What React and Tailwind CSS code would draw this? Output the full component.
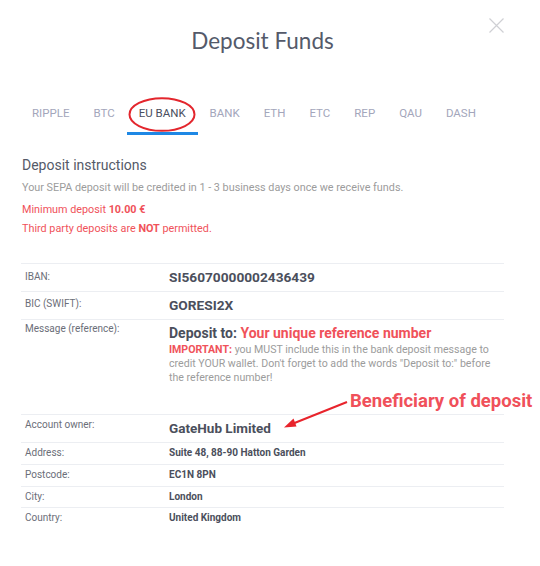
import React from "react";

const tabs = ["RIPPLE", "BTC", "EU BANK", "BANK", "ETH", "ETC", "REP", "QAU", "DASH"];

function Row({ label, children, className, labelClass, valueClass }) {
  return (
    <div className={"flex border-t border-[#eceef2] " + className}>
      <div className={"w-[148px] shrink-0 pl-[4px] text-[10px] leading-[14px] text-[#6b6e78] whitespace-nowrap " + labelClass}>{label}</div>
      <div className={"flex-1 " + valueClass}>{children}</div>
    </div>
  );
}

export default function App() {
  return (
    <div className="relative w-[540px] h-[566px] bg-white overflow-hidden" style={{ fontFamily: "Roboto, 'Liberation Sans', sans-serif" }}>
      {/* close */}
      <svg className="absolute left-[489px] top-[18px]" width="15" height="15" viewBox="0 0 15 15">
        <path d="M0.5 0.5 L14.5 14.5 M14.5 0.5 L0.5 14.5" stroke="#cfd0d4" strokeWidth="1.2" fill="none" />
      </svg>

      <div className="pl-[21px] pr-[36px]">
        <h1
          className="pt-[26px] h-[56px] text-center text-[22.5px] leading-[30px] text-[#545a6a]"
          style={{ fontFamily: "Lato, 'Liberation Sans', sans-serif" }}
        >
          Deposit Funds
        </h1>

        <div className="mt-[47px] -ml-[1px] flex">
          {tabs.map((t) => {
            const active = t === "EU BANK";
            return (
              <div
                key={t}
                className={
                  "relative whitespace-nowrap px-[12px] pb-[9px] text-[11.5px] leading-[20px] border-b-[3px] " +
                  (active ? "border-[#1e88e5] text-[#4a4f5e]" : "border-transparent text-[#a3a6bb]")
                }
              >
                {t}
                {active && (
                  <svg className="absolute left-[1px] top-[-6px]" width="68" height="35" viewBox="0 0 68 35">
                    <ellipse cx="34" cy="17.5" rx="32.5" ry="16.3" stroke="#e3262d" strokeWidth="2" fill="none" />
                  </svg>
                )}
              </div>
            );
          })}
        </div>

        <div className="mt-[20px] pl-[1px]">
          <div className="text-[14px] leading-[20px] text-[#555a68]">Deposit instructions</div>
          <p className="mt-[5px] text-[10.8px] leading-[16px] text-[#9c9c9c]">
            Your SEPA deposit will be credited in 1 - 3 business days once we receive funds.
          </p>
          <p className="mt-[6px] text-[10.8px] leading-[16px] text-[#f0525a]">
            Minimum deposit <b className="font-bold">10.00 €</b>
          </p>
          <p className="mt-[3px] text-[10.8px] leading-[16px] text-[#f0525a]">
            Third party deposits are <b className="font-bold">NOT</b> permitted.
          </p>
        </div>

        <div className="mt-[26px]">
          <Row label="IBAN:" className="h-[28px]" labelClass="pt-[6px]" valueClass="pt-[4px]">
            <div className="text-[13.7px] leading-[18px] font-bold text-[#4b4f5c]">SI56070000002436439</div>
          </Row>
          <Row label="BIC (SWIFT):" className="h-[28px]" labelClass="pt-[5px]" valueClass="pt-[4px]">
            <div className="text-[13.7px] leading-[18px] font-bold text-[#4b4f5c]">GORESI2X</div>
          </Row>
          <Row label="Message (reference):" className="h-[95px]" labelClass="pt-[2px]" valueClass="pt-[4px]">
            <div className="text-[14px] leading-[18px] font-bold text-[#4b4f5c] whitespace-nowrap">
              Deposit to: <span className="text-[#f0525a]">Your unique reference number</span>
            </div>
            <p className="mt-[1px] text-[10.6px] leading-[14px] text-[#9c9c9c]">
              <b className="font-bold text-[#f0525a]">IMPORTANT:</b> you MUST include this in the bank deposit message to credit YOUR wallet. Don't forget to add the words "Deposit to:" before the reference number!
            </p>
          </Row>
          <Row label="Account owner:" className="h-[28px]" labelClass="pt-[3px]" valueClass="pt-[3px]">
            <div className="text-[13.5px] leading-[20px] font-bold text-[#4b4f5c]">GateHub Limited</div>
          </Row>
          <Row label="Address:" className="h-[22px]" labelClass="pt-[3px]" valueClass="pt-[3px]">
            <div className="text-[10px] leading-[14px] font-bold text-[#4b4f5c]">Suite 48, 88-90 Hatton Garden</div>
          </Row>
          <Row label="Postcode:" className="h-[22px]" labelClass="pt-[3px]" valueClass="pt-[3px]">
            <div className="text-[10px] leading-[14px] font-bold text-[#4b4f5c]">EC1N 8PN</div>
          </Row>
          <Row label="City:" className="h-[21px]" labelClass="pt-[3px]" valueClass="pt-[3px]">
            <div className="text-[10px] leading-[14px] font-bold text-[#4b4f5c]">London</div>
          </Row>
          <Row label="Country:" className="h-[22px]" labelClass="pt-[3px]" valueClass="pt-[3px]">
            <div className="text-[10px] leading-[14px] font-bold text-[#4b4f5c]">United Kingdom</div>
          </Row>
        </div>
      </div>

      {/* annotation */}
      <div className="absolute left-[350px] top-[390px] text-[18.5px] leading-[22px] font-bold text-[#f0505a] whitespace-nowrap">
        Beneficiary of deposit
      </div>
      <svg className="absolute left-[280px] top-[398px]" width="72" height="34" viewBox="0 0 72 34">
        <path d="M67 4 L12 26" stroke="#e8242c" strokeWidth="2" fill="none" />
        <path d="M4 29.5 L13.5 20.5 L16.5 28.5 Z" fill="#e8242c" />
      </svg>
    </div>
  );
}
